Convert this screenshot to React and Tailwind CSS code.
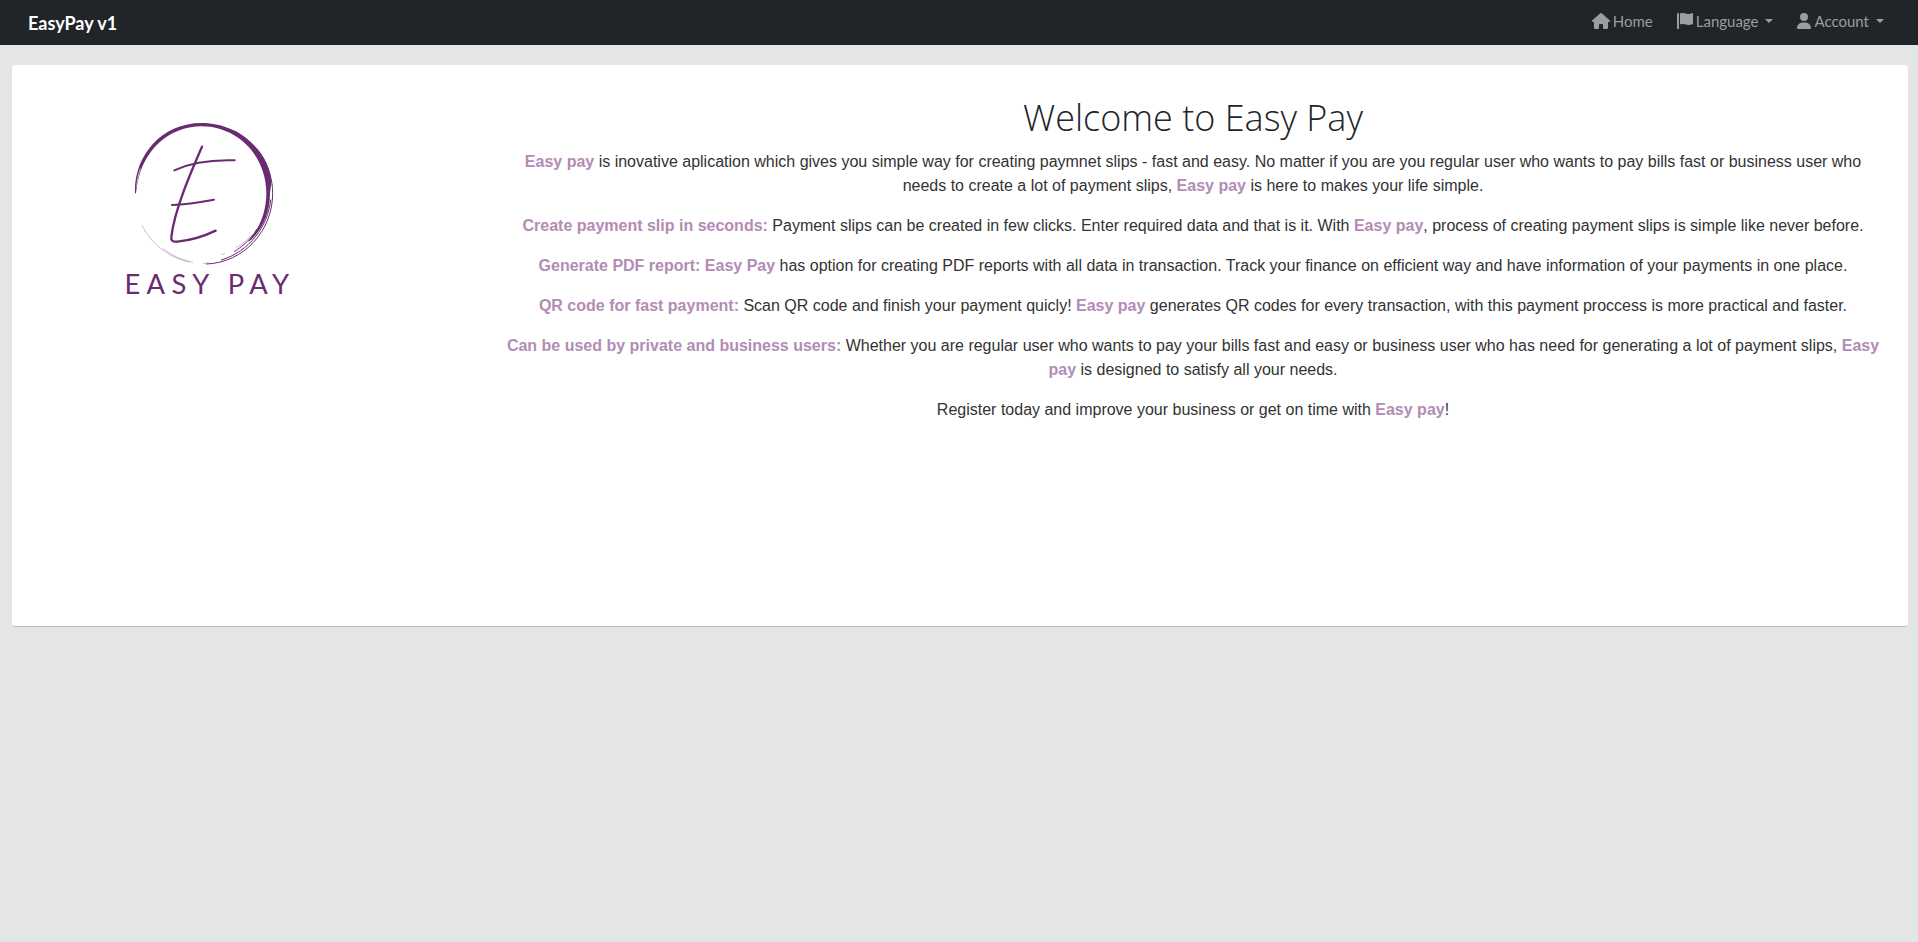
import { FaHouse, FaUser } from "react-icons/fa6";

function FlagIcon() {
  return (
    <svg className="size-4" viewBox="0 0 512 512" fill="currentColor" aria-hidden="true">
      <path d="M64 496C64 504.8 56.75 512 48 512h-32C7.25 512 0 504.8 0 496V32c0-17.75 14.25-32 32-32s32 14.25 32 32V496zM476.3 0c-6.365 0-13.01 1.35-19.34 4.233c-45.69 20.86-79.56 27.94-107.8 27.94c-59.96 0-94.81-31.86-163.9-31.87C160.9 .3055 131.6 4.867 96 15.75v350.5c32-9.984 59.87-14.1 84.85-14.1c73.63 0 124.9 31.78 198.6 31.78c31.91 0 68.02-5.971 111.1-23.09C504.1 355.9 512 344.4 512 332.1V30.73C512 11.1 495.3 0 476.3 0z" />
    </svg>
  );
}

function Caret() {
  return (
    <svg className="ml-1 h-1 w-2" viewBox="0 0 8 4" fill="currentColor" aria-hidden="true">
      <path d="M0 0h8L4 4z" />
    </svg>
  );
}

function Logo() {
  return (
    <svg className="h-[200px] w-[200px]" viewBox="0 0 600 600" role="img" aria-label="Easy Pay">
      <path
        fill="#6a2c70"
        d="M75 250C71 140 152 39 275 39C308 39 338 46 364 58C432 90 482 150 484 220L480 250C480 304 461 353 424 389L412 396C450 356 469 304 469 250C469 139 385 50 275 49C174 50 101 122 83 218C80 232 79 240 78 250Z"
      />
      <path stroke="#fff" strokeWidth="2" fill="none" d="M91 176C84 195 82 212 80 230" />
      <g fill="none" stroke="#6a2c70" strokeLinecap="round">
        <path strokeWidth="3" d="M372 62C442 98 488 170 488 250C488 362 402 458 290 462" />
        <path strokeWidth="3" d="M482 270C474 350 417 425 334 450M440 358C424 386 402 406 374 424" />
        <path strokeWidth="2" opacity="0.500" d="M426 374C411 391 396 403 378 412M336 434l8-3M280 460l16-1" />
        <path strokeWidth="1.600" opacity="0.600" d="M96 346C123 402 176 443 238 456M160 416C184 436 213 449 248 457" />
        <path strokeWidth="7" d="M276 110C242 188 193 300 184 381C182 392 189 396 202 395C242 391 278 381 317 362" />
        <path strokeWidth="6" d="M193 181C240 159 310 149 374 151M186 285C233 283 273 276 312 269" />
      </g>
      <text
        x="300"
        y="552"
        textAnchor="middle"
        fill="#6a2c70"
        className="font-['Lato',sans-serif] text-[82px] tracking-[19px]"
      >
        EASY PAY
      </text>
    </svg>
  );
}

function Em({ children }) {
  return <strong className="font-bold text-[#b28cb5]">{children}</strong>;
}

export default function App() {
  return (
    <div className="min-h-screen bg-[#e4e5e7] font-['Liberation_Sans',sans-serif] text-base text-[#333]">
      <nav className="flex h-[45px] items-center justify-between bg-[#212529] pr-[34px] pl-7 font-['Lato',sans-serif]">
        <a href="#" className="text-lg font-bold text-white">EasyPay v1</a>
        <div className="flex items-center gap-6 pb-1 text-[15px] leading-5 text-[#9b9d9e]">
          <a href="#" className="flex items-center gap-[3px]">
            <FaHouse className="h-4 w-[18px]" />
            Home
          </a>
          <button type="button" className="flex items-center gap-[3px]">
            <FlagIcon />
            Language
            <Caret />
          </button>
          <button type="button" className="flex items-center gap-[3px]">
            <FaUser className="h-4 w-3.5" />
            Account
            <Caret />
          </button>
        </div>
      </nav>
      <main className="pt-5 pr-2.5 pl-3">
        <section className="flex min-h-[562px] rounded-[3px] border-b border-[#b8babc] bg-white px-6 pt-[29px]">
          <div className="w-1/4 pt-4 pl-[74px]">
            <Logo />
          </div>
          <div className="w-3/4 pl-1 text-center">
            <h1 className="mb-2 font-['Open_Sans',sans-serif] text-4xl leading-[48px] font-light text-[#212529]">
              Welcome to Easy Pay
            </h1>
            <div className="space-y-4">
              <p>
                <Em>Easy pay</Em> is inovative aplication which gives you simple way for creating paymnet slips - fast
                and easy. No matter if you are you regular user who wants to pay bills fast or business user who needs
                to create a lot of payment slips, <Em>Easy pay</Em> is here to makes your life simple.
              </p>
              <p>
                <Em>Create payment slip in seconds:</Em> Payment slips can be created in few clicks. Enter required
                data and that is it. With <Em>Easy pay</Em>, process of creating payment slips is simple like never
                before.
              </p>
              <p>
                <Em>Generate PDF report:</Em> <Em>Easy Pay</Em> has option for creating PDF reports with all data in
                transaction. Track your finance on efficient way and have information of your payments in one place.
              </p>
              <p>
                <Em>QR code for fast payment:</Em> Scan QR code and finish your payment quicly! <Em>Easy pay</Em>{" "}
                generates QR codes for every transaction, with this payment proccess is more practical and faster.
              </p>
              <p>
                <Em>Can be used by private and business users:</Em> Whether you are regular user who wants to pay your
                bills fast and easy or business user who has need for generating a lot of payment slips,{" "}
                <Em>Easy pay</Em> is designed to satisfy all your needs.
              </p>
              <p>
                Register today and improve your business or get on time with <Em>Easy pay</Em>!
              </p>
            </div>
          </div>
        </section>
      </main>
    </div>
  );
}
